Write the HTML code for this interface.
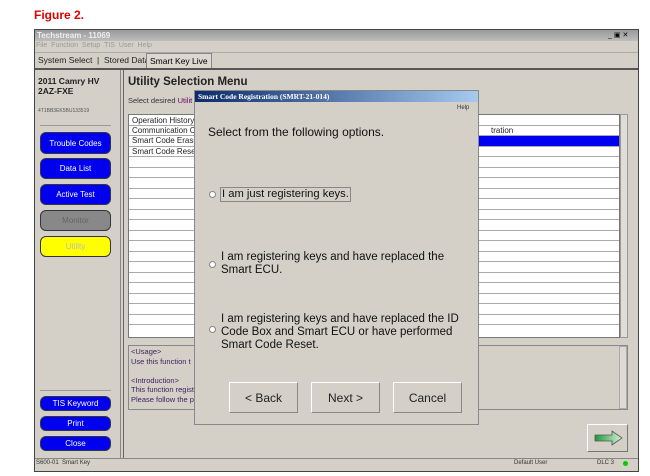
<!DOCTYPE html>
<html><head><style>
*{margin:0;padding:0;box-sizing:border-box}
body{width:650px;height:476px;background:#fff;position:relative;overflow:hidden;font-family:"Liberation Sans",Arial,sans-serif}
.a{position:absolute;white-space:nowrap}
.btn{position:absolute;left:40px;width:71px;border-radius:6px;border:1px solid #334;background:#0000ee;color:#fff;font-size:8px;text-align:center}
.row{position:absolute;left:0;width:100%;height:1px;background:#aaa}
.lt{position:absolute;left:3px;font-size:8px;color:#222;white-space:nowrap}
.db{position:absolute;top:382px;width:69px;height:31px;background:#d4d0c8;border:1px solid #fff;border-right-color:#888;border-bottom-color:#888;font-size:12px;text-align:center;line-height:30px;color:#222}
.rad{position:absolute;width:7px;height:7px;border-radius:50%;border:1px solid #888;background:#fff}
.opt{position:absolute;font-size:11.5px;color:#111;line-height:13px;white-space:nowrap}
</style></head><body>
<div class="a" style="left:34px;top:8px;font-size:12px;font-weight:bold;color:#e00000">Figure 2.</div>
<div class="a" style="left:34px;top:29px;width:605px;height:443px;background:#d4d0c8;border:1px solid #444"></div>
<div class="a" style="left:35px;top:30px;width:603px;height:11px;background:linear-gradient(#9a9a9a,#bdbdbd)"></div>
<div class="a" style="left:37px;top:31px;font-size:8px;color:#eee;font-weight:bold">Techstream - 11069</div>
<div class="a" style="left:608px;top:31px;font-size:7px;color:#000;letter-spacing:2px">_▣✕</div>
<div class="a" style="left:36px;top:42px;font-size:7px;color:#999">File &nbsp;Function &nbsp;Setup &nbsp;TIS &nbsp;User &nbsp;Help</div>
<div class="a" style="left:35px;top:52px;width:603px;height:1px;background:#aaa"></div>
<div class="a" style="left:38px;top:55px;font-size:8.5px;color:#222">System Select &nbsp;| &nbsp;Stored Data</div>
<div class="a" style="left:146px;top:53px;width:66px;height:15px;border:1px solid #888;border-bottom:none;background:#dcd8d0;font-size:8.5px;padding:2px 3px;white-space:nowrap">Smart Key Live</div>
<div class="a" style="left:35px;top:68px;width:603px;height:2px;background:#555"></div>
<div class="a" style="left:38px;top:76px;font-size:8.5px;font-weight:bold;color:#222;line-height:10px">2011 Camry HV<br>2AZ-FXE</div>
<div class="a" style="left:38px;top:108px;font-size:5px;color:#555">4T1BB3EK5BU133519</div>
<div class="a" style="left:40px;top:125px;width:71px;height:1px;background:#999"></div>
<div class="btn" style="top:132px;height:22px;line-height:21px">Trouble Codes</div>
<div class="btn" style="top:158px;height:21px;line-height:20px">Data List</div>
<div class="btn" style="top:184px;height:21px;line-height:20px">Active Test</div>
<div class="btn" style="top:210px;height:21px;line-height:20px;background:#888;color:#666">Monitor</div>
<div class="btn" style="top:236px;height:21px;line-height:20px;background:#ffff00;color:#bbb">Utility</div>
<div class="a" style="left:40px;top:390px;width:71px;height:1px;background:#999"></div>
<div class="btn" style="top:396px;height:15px;line-height:14px">TIS Keyword</div>
<div class="btn" style="top:416px;height:15px;line-height:14px">Print</div>
<div class="btn" style="top:436px;height:15px;line-height:14px">Close</div>
<div class="a" style="left:120px;top:70px;width:1px;height:388px;background:#888"></div>
<div class="a" style="left:123px;top:70px;width:1px;height:388px;background:#666"></div>
<div class="a" style="left:128px;top:76px;font-size:11.5px;font-weight:bold;color:#222">Utility Selection Menu</div>
<div class="a" style="left:128px;top:96px;font-size:7.5px;color:#333">Select desired <span style="color:#606">Utilit</span></div>
<div class="a" style="left:128px;top:114px;width:492px;height:224px;background:#fff;border:1px solid #777;overflow:hidden">
<div class="a" style="left:350px;top:21px;width:142px;height:10px;background:#0000f0"></div>
<div class="lt" style="top:1px">Operation History</div>
<div class="lt" style="top:11px">Communication Ch</div>
<div class="lt" style="top:21px">Smart Code Erasu</div>
<div class="lt" style="top:32px">Smart Code Reset</div>
<div class="lt" style="top:11px;left:362px">tration</div>
<div class="row" style="top:10px"></div><div class="row" style="top:20px"></div><div class="row" style="top:31px"></div><div class="row" style="top:41px"></div><div class="row" style="top:52px"></div><div class="row" style="top:62px"></div><div class="row" style="top:73px"></div><div class="row" style="top:83px"></div><div class="row" style="top:94px"></div><div class="row" style="top:104px"></div><div class="row" style="top:115px"></div><div class="row" style="top:125px"></div><div class="row" style="top:136px"></div><div class="row" style="top:146px"></div><div class="row" style="top:157px"></div><div class="row" style="top:167px"></div><div class="row" style="top:178px"></div><div class="row" style="top:188px"></div><div class="row" style="top:199px"></div><div class="row" style="top:209px"></div>
</div>
<div class="a" style="left:620px;top:114px;width:8px;height:224px;background:#e0ddd6;border:1px solid #999"></div>
<div class="a" style="left:128px;top:345px;width:500px;height:65px;background:#d4d0c8;border:1px solid #888"></div>
<div class="a" style="left:131px;top:347px;font-size:7.5px;color:#402060;line-height:9.5px">&lt;Usage&gt;<br>Use this function t<br><br>&lt;Introduction&gt;<br>This function regist<br>Please follow the p</div>
<div class="a" style="left:619px;top:346px;width:8px;height:63px;border:1px solid #aaa;background:#dedad3"></div>
<div class="a" style="left:587px;top:424px;width:41px;height:28px;background:#d4d0c8;border:1px solid #fff;border-right-color:#777;border-bottom-color:#777"></div>
<svg class="a" style="left:594px;top:430px" width="30" height="16"><defs><linearGradient id="g"><stop offset="0" stop-color="#1a9a3a"/><stop offset="1" stop-color="#d8f0d8"/></linearGradient></defs><path d="M1 5H18V1L28 8L18 15V11H1Z" fill="url(#g)" stroke="#555" stroke-width="0.8"/></svg>
<div class="a" style="left:35px;top:458px;width:603px;height:13px;background:#d4d0c8;border-top:1px solid #888"></div>
<div class="a" style="left:36px;top:460px;font-size:6px;color:#333">S600-01 &nbsp;Smart Key</div>
<div class="a" style="left:514px;top:460px;font-size:6px;color:#333">Default User</div>
<div class="a" style="left:597px;top:460px;font-size:6px;color:#333">DLC 3</div>
<div class="a" style="left:623px;top:461px;width:5px;height:5px;border-radius:50%;background:#0c0"></div>
<div class="a" style="left:194px;top:90px;width:285px;height:335px;background:#d4d0c8;border:1px solid #888"></div>
<div class="a" style="left:195px;top:91px;width:283px;height:11px;background:linear-gradient(90deg,#0a2a6a,#a6caf0);font-family:'Liberation Serif',serif;font-size:7.5px;font-weight:bold;color:#fff;padding-left:3px;line-height:11px">Smart Code Registration (SMRT-21-014)</div>
<div class="a" style="left:457px;top:105px;font-size:6px;color:#333">Help</div>
<div class="a" style="left:208px;top:125px;font-size:12px;color:#111">Select from the following options.</div>
<div class="rad" style="left:209px;top:191px"></div>
<div class="opt" style="left:220px;top:187px;border:1px solid #888;padding:0 1px;font-size:11.2px">I am just registering keys.</div>
<div class="rad" style="left:209px;top:261px"></div>
<div class="opt" style="left:221px;top:251px">I am registering keys and have replaced the<br>Smart ECU.</div>
<div class="rad" style="left:209px;top:326px"></div>
<div class="opt" style="left:221px;top:313px">I am registering keys and have replaced the ID<br>Code Box and Smart ECU or have performed<br>Smart Code Reset.</div>
<div class="db" style="left:229px">&lt; Back</div>
<div class="db" style="left:311px">Next &gt;</div>
<div class="db" style="left:393px">Cancel</div>
</body></html>
